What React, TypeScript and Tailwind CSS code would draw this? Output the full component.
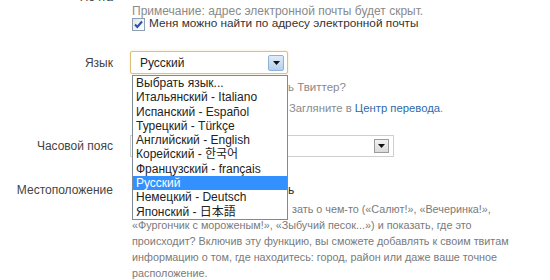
import React from "react";

const options = [
  "Выбрать язык...",
  "Итальянский - Italiano",
  "Испанский - Español",
  "Турецкий - Türkçe",
  "Английский - English",
  "Корейский - 한국어",
  "Французский - français",
  "Русский",
  "Немецкий - Deutsch",
  "Японский - 日本語",
];

function Arrow() {
  return (
    <svg width="7" height="4" viewBox="0 0 7 4">
      <path d="M0 0 H7 L3.5 4 Z" fill="#111" />
    </svg>
  );
}

function CheckBox() {
  return (
    <svg width="13" height="13" viewBox="0 0 13 13" className="shrink-0">
      <defs>
        <linearGradient id="cb" x1="0" y1="0" x2="1" y2="1">
          <stop offset="0" stopColor="#dfe4ea" />
          <stop offset="1" stopColor="#ffffff" />
        </linearGradient>
      </defs>
      <rect x="0.5" y="0.5" width="12" height="12" fill="url(#cb)" stroke="#8e9fb3" />
      <path d="M3 6.5 L5.3 9 L10 3.5" fill="none" stroke="#2a4fa6" strokeWidth="2" />
    </svg>
  );
}

function Label({ children }: { children?: React.ReactNode }) {
  return (
    <div className="w-[113px] shrink-0 text-right text-[12px] leading-[14px] text-[#444]">{children}</div>
  );
}

export default function App() {
  return (
    <div className="w-[550px] h-[280px] overflow-hidden bg-white font-['Liberation_Sans','Noto_Sans_CJK_JP',sans-serif]">
      {/* Почта */}
      <div className="flex h-[14px] -mt-[10px] leading-[14px]">
        <Label>Почта</Label>
      </div>
      <div className="flex h-[14px] leading-[14px]">
        <Label />
        <div className="ml-[19px] text-[12px] text-[#8a8a8a] whitespace-nowrap">
          Примечание: адрес электронной почты будет скрыт.
        </div>
      </div>
      <div className="flex h-[14px] -mt-[1px] items-center">
        <Label />
        <div className="ml-[19px] flex items-center gap-[4px] text-[11.8px] text-[#333] whitespace-nowrap">
          <CheckBox />
          <span>Меня можно найти по адресу электронной почты</span>
        </div>
      </div>

      {/* Язык */}
      <div className="flex items-center mt-[20px] h-[23px]">
        <Label>Язык</Label>
        <div className="ml-[17px] relative">
          <div className="w-[158px] h-[23px] border border-[#dcc07c] shadow-[0_0_2px_#f2dba5] rounded-[2px] bg-white flex items-center justify-between pl-[9px] pr-[3px]">
            <span className="text-[12px] text-[#222]">Русский</span>
            <div className="w-[16px] h-[16px] border border-[#8fb1d6] rounded-[2px] bg-gradient-to-b from-[#dfebf9] to-[#b6cfec] flex items-center justify-center">
              <Arrow />
            </div>
          </div>
          <div className="absolute left-[2px] top-[24px] z-10 w-[156px] border border-[#7d8a98] bg-white">
            {options.map((o) => (
              <div
                key={o}
                className={
                  o === "Русский"
                    ? "h-[14.3px] leading-[14.3px] px-[3px] text-[12px] whitespace-nowrap bg-[#3390ff] text-white"
                    : "h-[14.3px] leading-[14.3px] px-[3px] text-[12px] whitespace-nowrap text-[#222]"
                }
              >
                {o}
              </div>
            ))}
          </div>
        </div>
      </div>
      <div className="flex h-[14px] leading-[14px] mt-[6px]">
        <Label />
        <div className="ml-[19px] text-[11.5px] text-[#8a8a8a] whitespace-nowrap">
          <span className="inline-block w-[156px] overflow-hidden align-top">Хотите помочь перевести Твиттер?</span>
          <span>ь Твиттер?</span>
        </div>
      </div>
      <div className="flex h-[14px] leading-[14px] mt-[7px]">
        <Label />
        <div className="ml-[19px] text-[11.3px] text-[#8a8a8a] whitespace-nowrap">
          <span className="inline-block w-[157px] overflow-hidden align-top">Не нашли свой язык? </span>
          <span>
            Загляните в <span className="text-[#2f6aa8]">Центр перевода</span>.
          </span>
        </div>
      </div>

      {/* Часовой пояс */}
      <div className="flex items-center mt-[20px] h-[22px]">
        <Label>Часовой пояс</Label>
        <div className="ml-[17px] w-[264px] h-[22px] border border-[#cfcfcf] bg-white flex items-center justify-end pr-[4px]">
          <div className="w-[15px] h-[14px] border border-[#9c9c9c] bg-gradient-to-b from-[#f2f2f2] to-[#dadada] flex items-center justify-center">
            <Arrow />
          </div>
        </div>
      </div>

      {/* Местоположение */}
      <div className="flex items-center mt-[26px] h-[14px]">
        <Label>Местоположение</Label>
        <div className="ml-[19px] flex items-center gap-[4px] text-[12px] text-[#333] whitespace-nowrap">
          <CheckBox />
          <span className="inline-block w-[139px] overflow-hidden align-top">Сообщать, где я нахожусь</span>
          <span className="-ml-[4px]">ь</span>
        </div>
      </div>
      <div className="flex mt-[4px]">
        <Label />
        <div className="ml-[19px] text-[10.8px] leading-[16px] text-[#7a7a7a] whitespace-nowrap">
          <div>
            <span className="inline-block w-[160px] overflow-hidden align-top">Вы можете не только расска</span>
            <span>зать о чем-то («Салют!», «Вечеринка!»,</span>
          </div>
          <div>«Фургончик с мороженым!», «Зыбучий песок...») и показать, где это</div>
          <div>происходит? Включив эту функцию, вы сможете добавлять к своим твитам</div>
          <div>информацию о том, где находитесь: город, район или даже ваше точное</div>
          <div>расположение.</div>
        </div>
      </div>
    </div>
  );
}
